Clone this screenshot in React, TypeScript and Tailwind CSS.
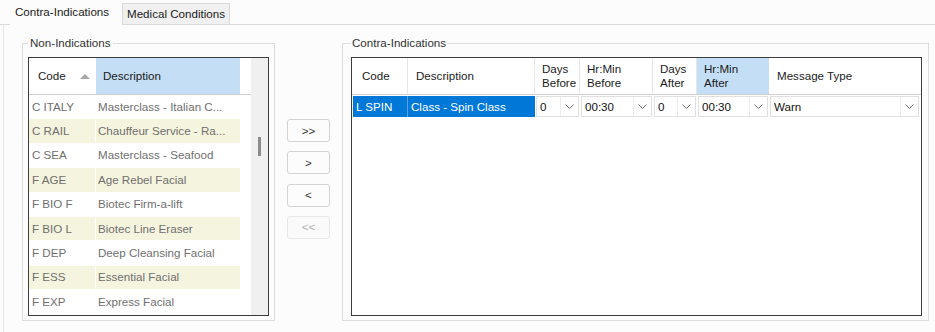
import React from "react";

const leftRows: [string, string][] = [
  ["C ITALY", "Masterclass - Italian C..."],
  ["C RAIL", "Chauffeur Service - Ra..."],
  ["C SEA", "Masterclass - Seafood"],
  ["F AGE", "Age Rebel Facial"],
  ["F BIO F", "Biotec Firm-a-lift"],
  ["F BIO L", "Biotec Line Eraser"],
  ["F DEP", "Deep Cleansing Facial"],
  ["F ESS", "Essential Facial"],
  ["F EXP", "Express Facial"],
];

function Chevron() {
  return (
    <svg width="9" height="5" viewBox="0 0 9 5" className="block">
      <path d="M0.5 0.5 L4.5 4.5 L8.5 0.5" fill="none" stroke="#6e6e6e" strokeWidth="1" />
    </svg>
  );
}

function Drop({ value, w }: { value: string; w: string }) {
  return (
    <div className={`${w} h-full p-px`}>
      <div className="h-full w-full border border-[#e0e0e0] bg-white flex items-center">
        <span className="flex-1 pl-[3px] text-[#111]">{value}</span>
        <div className="w-[18px] h-full border-l border-[#ececec] flex items-center justify-center">
          <Chevron />
        </div>
      </div>
    </div>
  );
}

function NavBtn({ label, disabled }: { label: string; disabled?: boolean }) {
  return (
    <div
      className={
        disabled
          ? "w-[43px] h-[23px] rounded-[3px] border border-[#e8e8e8] bg-[#fafafa] text-[#b0b0b0] flex items-center justify-center"
          : "w-[43px] h-[23px] rounded-[3px] border border-[#d3d3d3] bg-[#fcfcfc] text-[#333] flex items-center justify-center"
      }
    >
      {label}
    </div>
  );
}

export default function App() {
  return (
    <div className="w-[935px] h-[332px] bg-[#fcfcfc] overflow-hidden flex flex-col font-['Liberation_Sans',Arial,sans-serif] text-[11.6px] leading-[14px] text-[#1b1b1b]">
      {/* Tabs */}
      <div className="h-[25px] flex items-end pl-[10px] border-b border-[#dadada]">
        <div className="w-[112px] h-[25px] -mb-px bg-[#fcfcfc] flex items-center pl-[5px] pb-[1px]">
          Contra-Indications
        </div>
        <div className="w-[108px] h-[21px] border border-b-0 border-[#d9d9d9] bg-[#f0f0f0] flex items-center justify-center">
          Medical Conditions
        </div>
      </div>

      {/* Panel */}
      <div className="flex-1 ml-[3px] border-l border-[#e6e6e6] flex items-start pl-[18px] pt-[11px]">
        {/* Non-Indications */}
        <fieldset className="w-[253px] border border-[#dcdcdc] px-[5px] pb-[4px] pt-[7px]">
          <legend className="px-[2px] text-[#333]">Non-Indications</legend>
          <div className="w-[241px] h-[259px] border border-[#3c3c3c] bg-white flex">
            <div className="flex-1 flex flex-col">
              <div className="h-[37px] border-b border-[#cfcfcf] flex">
                <div className="w-[67px] flex items-center pl-[9px] pr-[6px] justify-between">
                  <span>Code</span>
                  <svg width="10" height="5" viewBox="0 0 10 5" className="block">
                    <path d="M0 5 L5 0 L10 5 Z" fill="#a8a8a8" />
                  </svg>
                </div>
                <div className="w-[144px] bg-[#c4def5] flex items-center pl-[7px]">Description</div>
              </div>
              {leftRows.map(([code, desc], i) => (
                <div key={code} className="h-[24.4px] flex border-b border-white text-[#6f6f6f]">
                  <div
                    className={
                      i % 2 === 1
                        ? "w-[67px] bg-[#f5f4de] border-r border-white flex items-center pl-[3px]"
                        : "w-[67px] border-r border-white flex items-center pl-[3px]"
                    }
                  >
                    {code}
                  </div>
                  <div
                    className={
                      i % 2 === 1
                        ? "w-[144px] bg-[#f5f4de] flex items-center pl-[2px] whitespace-nowrap"
                        : "w-[144px] flex items-center pl-[2px] whitespace-nowrap"
                    }
                  >
                    {desc}
                  </div>
                </div>
              ))}
            </div>
            <div className="w-[17px] bg-[#f0f0f0] pt-[79px] pl-[7px]">
              <div className="w-[3px] h-[19px] bg-[#8c8c8c]" />
            </div>
          </div>
        </fieldset>

        {/* Buttons */}
        <div className="ml-[12px] mt-[83px] flex flex-col gap-[9.3px]">
          <NavBtn label=">>" />
          <NavBtn label=">" />
          <NavBtn label="<" />
          <NavBtn label="<<" disabled />
        </div>

        {/* Contra-Indications */}
        <fieldset className="ml-[12px] w-[587px] border border-[#dcdcdc] pl-[8px] pr-[6px] pb-[4px] pt-[7px]">
          <legend className="px-[1px] text-[#333]">Contra-Indications</legend>
          <div className="w-[571px] h-[259px] border border-[#3c3c3c] bg-white flex flex-col">
            <div className="h-[37px] border-b border-[#cfcfcf] flex">
              <div className="w-[56px] border-r border-[#e6e6e6] flex items-center pl-[10px]">Code</div>
              <div className="w-[127px] border-r border-[#e6e6e6] flex items-center pl-[8px]">Description</div>
              <div className="w-[45px] border-r border-[#e6e6e6] flex flex-col justify-center pl-[7px] whitespace-nowrap">
                <span>Days</span>
                <span>Before</span>
              </div>
              <div className="w-[73px] border-r border-[#e6e6e6] flex flex-col justify-center pl-[7px]">
                <span>Hr:Min</span>
                <span>Before</span>
              </div>
              <div className="w-[44px] border-r border-[#e6e6e6] flex flex-col justify-center pl-[7px]">
                <span>Days</span>
                <span>After</span>
              </div>
              <div className="w-[72px] bg-[#c4def5] flex flex-col justify-center pl-[7px]">
                <span>Hr:Min</span>
                <span>After</span>
              </div>
              <div className="flex-1 flex items-center pl-[8px]">Message Type</div>
            </div>
            <div className="h-[23px] flex">
              <div className="w-[56px] pl-px py-px">
                <div className="h-full bg-[#0078d7] text-white flex items-center pl-[3px] border-r border-[#5aa3e3]">
                  L SPIN
                </div>
              </div>
              <div className="w-[127px] py-px">
                <div className="h-full bg-[#0078d7] text-white flex items-center pl-[3px]">Class - Spin Class</div>
              </div>
              <Drop value="0" w="w-[45px]" />
              <Drop value="00:30" w="w-[73px]" />
              <Drop value="0" w="w-[44px]" />
              <Drop value="00:30" w="w-[72px]" />
              <Drop value="Warn" w="w-[151px]" />
            </div>
          </div>
        </fieldset>
      </div>
    </div>
  );
}
